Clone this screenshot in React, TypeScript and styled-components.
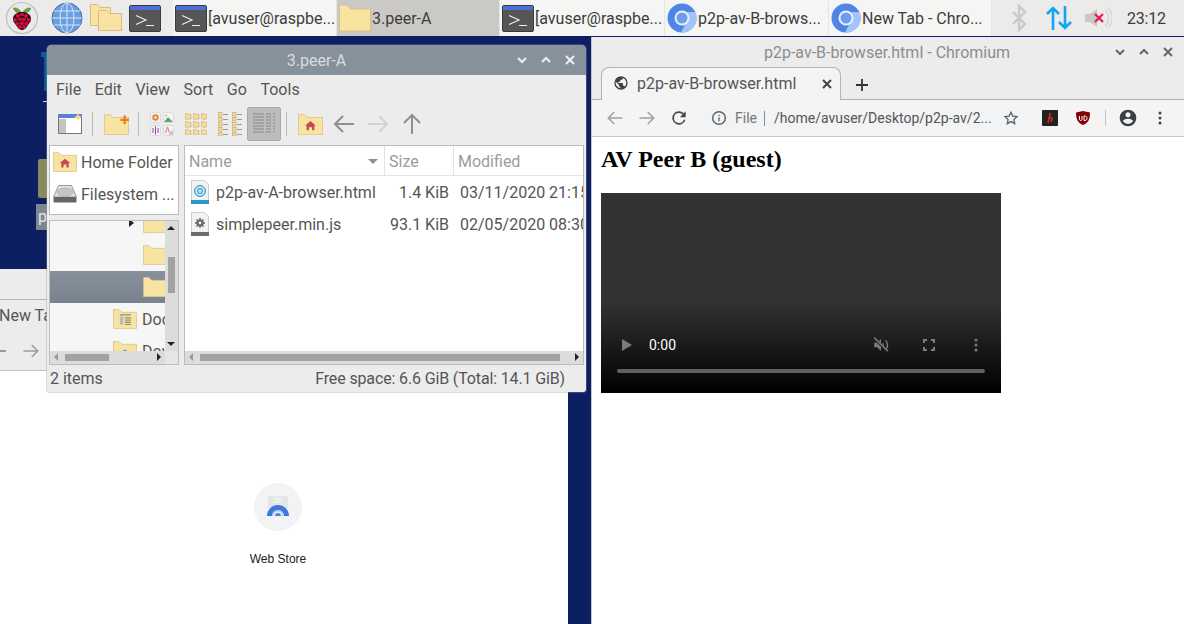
import React from "react";
import styled, { createGlobalStyle } from "styled-components";

const Global = createGlobalStyle`
  html, body { margin: 0; padding: 0; width: 1184px; height: 624px; overflow: hidden; }
  body { font-family: Roboto, "Liberation Sans", sans-serif; background: #0d1f63; }
  #root { width: 1184px; height: 624px; }
  svg { display: block; flex: none; }
`;

const Screen = styled.div`
  width: 1184px; height: 624px; display: flex; flex-direction: column; overflow: hidden;
`;
const Panel = styled.div`
  height: 36px; flex: none; background: #ecebea; display: flex; align-items: center;
`;
const Launchers = styled.div`
  width: 173px; flex: none; height: 36px; display: flex; align-items: center; padding-left: 5px; box-sizing: border-box;
`;
const Slot = styled.div<{ $ml: number }>`
  margin-left: ${p => p.$ml}px; flex: none;
`;
const Task = styled.div<{ $active?: boolean; $w: number }>`
  width: ${p => p.$w}px; height: 36px; flex: none; box-sizing: border-box; display: flex; align-items: center; gap: 1px; padding-left: 2px;
  background: ${p => (p.$active ? "#cbc9c5" : "#f5f5f4")};
  font-size: 16px; color: #3c3c3c; white-space: nowrap; overflow: hidden;
  border-right: 1px solid #e6e5e3;
`;
const Tray = styled.div`
  flex: 1; display: flex; align-items: center; height: 36px;
`;
const Clock = styled.span`
  font-size: 16px; color: #3c3c3c; margin-left: 15px; letter-spacing: -0.2px;
`;
const Desktop = styled.div`
  flex: 1; position: relative; background: #0d1f63;
`;
const TrashLid = styled.div`
  position: absolute; left: 41px; top: 16px; width: 8px; height: 5px; background: #0b5c9c;
`;
const Trash = styled.div`
  position: absolute; left: 44px; top: 21px; width: 5px; height: 34px; background: #0b5a96;
`;
const TrashMark = styled.div`
  position: absolute; left: 43px; top: 65px; width: 5px; height: 1px; background: #d5d9e6;
`;
const DeskFolder = styled.div`
  position: absolute; left: 38px; top: 123px; width: 12px; height: 39px; background: #8a8a62; border-radius: 2px 0 0 2px;
`;
const DeskLabel = styled.div`
  position: absolute; left: 36px; top: 168px; width: 14px; height: 26px; background: #7d8791; color: #e8e8e8; font-size: 16px; padding-left: 2px; box-sizing: border-box; line-height: 26px;
`;
const BackWindow = styled.div`
  position: absolute; left: 0; top: 233px; width: 568px; height: 355px; background: #fff; display: flex; flex-direction: column;
`;
const BackTabs = styled.div`
  height: 31px; background: #ececec; border-bottom: 1px solid #b5b5b5; box-sizing: border-box;
`;
const BackTabRow = styled.div`
  height: 32px; background: #ececec; font-size: 16px; color: #555; line-height: 32px; white-space: nowrap; overflow: hidden; margin-left: -1px; padding-left: 0;
`;
const BackNav = styled.div`
  height: 39px; background: #ececec; border-bottom: 1px solid #c4c4c4; box-sizing: border-box; display: flex; align-items: center; gap: 16px;
`;
const BackDash = styled.div`
  width: 6px; height: 2px; background: #9a9a9a;
`;
const StoreTile = styled.div`
  position: absolute; left: 218px; top: 214px; width: 120px; display: flex; flex-direction: column; align-items: center;
`;
const StoreCircle = styled.div`
  width: 48px; height: 48px; border-radius: 50%; background: #f1f3f4; display: flex; align-items: center; justify-content: center;
`;
const StoreLabel = styled.div`
  margin-top: 21px; font: 12px "Liberation Sans", Arial, sans-serif; color: #202124;
`;
const FileWindow = styled.div`
  position: absolute; left: 47px; top: 9px; width: 539px; height: 347px; background: #ececec; border-radius: 5px 5px 3px 3px; overflow: hidden; display: flex; flex-direction: column;
  box-shadow: 0 0 0 1px rgba(150,150,150,.35);
`;
const TitleBar = styled.div<{ $active?: boolean; $h: number }>`
  height: ${p => p.$h}px; flex: none; position: relative; display: flex; align-items: center; justify-content: center;
  background: ${p => (p.$active ? "#87919b" : "#ececec")}; color: ${p => (p.$active ? "#d9dcdf" : "#8d8d8d")}; font-size: 16px;
`;
const BrowserTitle = styled.span`
  margin: 2px 2px 0 0;
`;
const WinButtons = styled.div<{ $right: number; $gap: number }>`
  position: absolute; right: ${p => p.$right}px; top: 0; bottom: 0; display: flex; align-items: center; gap: ${p => p.$gap}px;
`;
const MenuBar = styled.div`
  height: 28px; flex: none; display: flex; align-items: center; padding-left: 9px; gap: 13.6px; font-size: 16px; color: #555;
`;
const ToolBar = styled.div`
  height: 42px; flex: none; display: flex; align-items: center; padding-left: 11px;
`;
const Sep = styled.div<{ $ml: number; $mr: number }>`
  width: 1px; height: 24px; background: #b9b9b9; margin: 0 ${p => p.$mr}px 0 ${p => p.$ml}px;
`;
const ToolBtn = styled.div<{ $on?: boolean; $ml?: number }>`
  width: 34px; height: 34px; display: flex; align-items: center; justify-content: center; box-sizing: border-box; border-radius: 2px; margin-left: ${p => p.$ml ?? 0}px;
  ${p => p.$on && "background:#bdbdbd;border:1px solid #a9a9a9;"}
`;
const Body = styled.div`
  height: 220px; flex: none; display: flex; padding: 0 2px; gap: 5px;
`;
const Side = styled.div`
  width: 130px; flex: none; display: flex; flex-direction: column; gap: 5px;
`;
const Places = styled.div`
  height: 70px; flex: none; background: #fff; border: 1px solid #bcbcbc; box-sizing: border-box; display: flex; flex-direction: column;
`;
const PlaceRow = styled.div`
  height: 32px; display: flex; align-items: center; gap: 4px; padding-left: 3px; font-size: 16px; color: #555; white-space: nowrap; overflow: hidden;
`;
const TreeBox = styled.div`
  flex: 1; border: 1px solid #bcbcbc; box-sizing: border-box; display: grid; grid-template-columns: 1fr 13px; grid-template-rows: 1fr 13px; background: #f6f6f6; overflow: hidden; min-height: 0;
`;
const TreeList = styled.div`
  overflow: hidden; min-width: 0; min-height: 0;
`;
const TreeInner = styled.div`
  margin-top: -14px; display: flex; flex-direction: column;
`;
const TreeRow = styled.div<{ $sel?: boolean; $pad: number }>`
  height: 32px; flex: none; display: flex; align-items: center; gap: 5px; padding-left: ${p => p.$pad}px; font-size: 16px; color: #555; white-space: nowrap;
  ${p => p.$sel && "background: linear-gradient(#87919b,#79838d);"}
`;
const Expander = styled.span`
  width: 0; height: 0; border-left: 5px solid #222; border-top: 4px solid transparent; border-bottom: 4px solid transparent; margin-right: 4px;
`;
const VScroll = styled.div`
  background: #dcdcdc; display: flex; flex-direction: column; align-items: center; justify-content: flex-start; position: relative;
`;
const Corner = styled.div` background: #e6e6e6; `;
const HScroll = styled.div<{ $fixed?: boolean }>`
  background: #dcdcdc; display: flex; align-items: center; position: relative;
  ${p => p.$fixed && "height:13px;flex:none;"}
`;
const Thumb = styled.div<{ $l: number; $w: number }>`
  margin-left: ${p => p.$l}px; width: ${p => p.$w}px; height: 7px; background: #a2a2a2;
`;
const VThumb = styled.div`
  position: absolute; top: 36px; left: 3px; width: 7px; height: 36px; background: #a2a2a2;
`;
const Arrow = styled.span<{ $dir: "u" | "d" | "l" | "r"; $c: string }>`
  position: absolute; width: 0; height: 0;
  ${p => {
    if (p.$dir === "u") return `top:5px;left:2px;border-left:4px solid transparent;border-right:4px solid transparent;border-bottom:4px solid ${p.$c};`;
    if (p.$dir === "d") return `bottom:5px;left:2px;border-left:4px solid transparent;border-right:4px solid transparent;border-top:4px solid ${p.$c};`;
    if (p.$dir === "l") return `left:4px;top:2px;border-top:4px solid transparent;border-bottom:4px solid transparent;border-right:4px solid ${p.$c};`;
    return `right:4px;top:2px;border-top:4px solid transparent;border-bottom:4px solid transparent;border-left:4px solid ${p.$c};`;
  }}
`;
const Files = styled.div`
  flex: 1; min-width: 0; background: #fff; border: 1px solid #bcbcbc; box-sizing: border-box; display: flex; flex-direction: column; overflow: hidden;
`;
const HeadRow = styled.div`
  height: 30px; flex: none; display: grid; grid-template-columns: 200px 69px 140px; border-bottom: 1px solid #e3e3e3; box-sizing: border-box; font-size: 16px; color: #9b9b9b;
`;
const HeadCell = styled.div`
  display: flex; align-items: center; padding: 1px 0 0 4px; border-right: 1px solid #e3e3e3; position: relative;
`;
const SortMark = styled.span`
  position: absolute; right: 6px; top: 13px; border-left: 5px solid transparent; border-right: 5px solid transparent; border-top: 5px solid #8f8f8f;
`;
const FileList = styled.div`
  flex: 1;
`;
const FileRow = styled.div`
  height: 32px; display: grid; grid-template-columns: 200px 69px 140px; font-size: 16px; color: #555; white-space: nowrap;
`;
const NameCell = styled.div`
  display: flex; align-items: center; gap: 7px; padding-left: 6px;
`;
const SizeCell = styled.div`
  display: flex; align-items: center; justify-content: flex-end; padding-right: 5px;
`;
const DateCell = styled.div`
  display: flex; align-items: center; padding-left: 6px;
`;
const Status = styled.div`
  flex: 1; display: flex; justify-content: space-between; align-items: center; padding: 0 21px 0 3px; font-size: 16px; color: #555;
`;
const FreeSpace = styled.span`
  letter-spacing: -0.14px;
`;
const BrowserWindow = styled.div`
  position: absolute; left: 591px; top: 1px; right: 0; bottom: 0; background: #fff; border-left: 1px solid #c4c4c4; display: flex; flex-direction: column;
`;
const TabStrip = styled.div`
  height: 34px; flex: none; background: #ececec; border-bottom: 1px solid #aeaeae; box-sizing: border-box; display: flex; align-items: flex-end; padding-left: 9px;
`;
const Tab = styled.div`
  width: 240px; height: 33px; margin-bottom: -1px; box-sizing: border-box; background: #f4f4f4; border: 1px solid #b4b4b4; border-bottom: none; border-radius: 8px 8px 0 0; display: flex; align-items: center; padding: 0 0 2px 11px; gap: 8px; font-size: 16px; color: #555; position: relative;
`;
const NewTab = styled.div`
  margin: 0 0 7px 14px;
`;
const NavBar = styled.div`
  height: 37px; flex: none; background: #f4f4f4; border-bottom: 1px solid #c9c9c9; box-sizing: border-box; display: flex; align-items: center; padding-left: 14px;
`;
const NavSpace = styled.span<{ $w: number }>`
  width: ${p => p.$w}px; flex: none;
`;
const Omni = styled.div`
  width: 326px; height: 28px; margin-left: 13px; background: #f1f3f4; border-radius: 14px; box-sizing: border-box; display: flex; align-items: center; padding-left: 9px; font-size: 14px; color: #555; position: relative; white-space: nowrap;
`;
const OmniFile = styled.span`
  color: #777; margin-left: 8px; padding-right: 7px; border-right: 1px solid #8a8a8a; line-height: 15px;
`;
const OmniPath = styled.span`
  margin-left: 9px; font-size: 14px;
`;
const OmniStar = styled.span`
  position: absolute; right: 9px; top: 6px;
`;
const NavIcons = styled.div`
  display: flex; align-items: center; margin-left: 14px;
`;
const NavDivider = styled.div`
  width: 1px; height: 16px; background: #c4c4c4; margin: 0 12px 0 14px;
`;
const Page = styled.div`
  flex: 1; background: #fff; padding: 0 9px;
`;
const Heading = styled.h2`
  font: bold 24px/27px "Liberation Serif", "Times New Roman", serif; color: #000; margin: 9px 0 20px;
`;
const Video = styled.div`
  width: 400px; height: 200px; position: relative; background: linear-gradient(#333 0, #333 54%, #000 100%); display: flex; flex-direction: column; justify-content: flex-end;
`;
const Controls = styled.div`
  display: flex; align-items: center; height: 20px; margin-bottom: 38px; padding-left: 20px; color: #fff; font-size: 14px;
`;
const Time = styled.span`
  margin-left: 16px; width: 223px;
`;
const CtlGroup = styled.div`
  display: flex; align-items: center; gap: 31px;
`;
const Progress = styled.div`
  position: absolute; left: 16px; right: 16px; bottom: 20px; height: 4px; border-radius: 2px; background: #606060;
`;

const Pi = () => (
  <svg width="34" height="34" viewBox="0 0 34 34">
    <circle cx="17" cy="17" r="15.5" fill="#e9e9e9" stroke="#bfbfbf" strokeWidth="1.2" />
    <path d="M16.500 12C15 8 11 6.500 8.500 7c.3 3 3.500 5.500 8 5zM17.500 12C19 8 23 6.500 25.500 7c-.3 3-3.500 5.500-8 5z" fill="#6aa53a" stroke="#3f7a25" strokeWidth=".5" />
    <path d="M17 11c4 0 9 2 9 7 0 3-2 4-3 6-1.500 3-4 5-6 5s-4.500-2-6-5c-1-2-3-3-3-6 0-5 5-7 9-7z" fill="#1d0a0e" />
    {[[17,13.500],[12.800,14.800],[21.200,14.800],[10.200,18.800],[15,18.300],[19,18.300],[23.800,18.800],[12.500,22.500],[17,22.300],[21.500,22.500],[14.800,26],[19.200,26]].map(([x,y],i)=>(
      <circle key={i} cx={x} cy={y} r="2.100" fill="#c8103e" />
    ))}
  </svg>
);
const Globe = () => (
  <svg width="32" height="32" viewBox="0 0 32 32">
    <circle cx="16" cy="16" r="15" fill="#6b9fe0" stroke="#3f6aa8" />
    <g stroke="#d6e6fb" strokeWidth="1" fill="none">
      <ellipse cx="16" cy="16" rx="7" ry="15" /><path d="M16 1v30M1 16h30M3 9h26M3 23h26" />
    </g>
  </svg>
);
const FolderPair = () => (
  <svg width="33" height="28" viewBox="0 0 33 28">
    <path d="M.5.5h7l3 3h10v18H.5z" fill="#f8e3a0" stroke="#d6bd88" />
    <path d="M8.500 6.500h8l3 3h12v17h-23z" fill="#f8e3a0" stroke="#d6bd88" />
  </svg>
);
const Term = () => (
  <svg width="32" height="27" viewBox="0 0 32 27">
    <rect x=".5" y=".5" width="31" height="26" rx="1.500" fill="#565656" stroke="#3a3a3a" />
    <rect x="1" y="1" width="30" height="4" fill="#4d6fd6" />
    <path d="M7 10.500l10 4.500-10 4.500M17 20.500h8" fill="none" stroke="#eee" strokeWidth="1.200" />
  </svg>
);
const Folder = ({ w = 32, h = 27, kind }: { w?: number; h?: number; kind?: "home" | "doc" | "dl" | "new" }) => (
  <svg width={w} height={h} viewBox="0 0 32 27">
    <path d="M.5.5h7l4 4h20v22H.5z" fill="#f9e3a0" stroke="#d8bf88" />
    {kind === "home" && <path d="M16 9l7 6h-2v6h-3v-4h-4v4h-3v-6H9z" fill="#c9474f" />}
    {kind === "doc" && <g><rect x="9" y="10" width="5" height="11" fill="#b9bcc0" /><path d="M9 8h15M16 12h8M16 15h8M16 18h8M16 21h8" stroke="#8d8d80" strokeWidth="1.500" /></g>}
    {kind === "dl" && <rect x="14" y="12" width="4" height="10" fill="#3d9ad6" />}
    {kind === "new" && <path d="M25 2h3v4h4v3h-4v4h-3V9h-4V6h4z" fill="#ef7d14" />}
  </svg>
);
const Chromium = () => (
  <svg width="30" height="30" viewBox="0 0 30 30">
    <circle cx="15" cy="15" r="14.500" fill="#4f86e6" />
    <path d="M15 9h13.500A14.500 14.500 0 0 1 14 29.500L20 18z" fill="#a3c4f7" />
    <circle cx="15" cy="15" r="7.500" fill="#e8f0fd" />
    <circle cx="15" cy="15" r="5.500" fill="#6d9eee" />
  </svg>
);
const Bluetooth = () => (
  <svg width="16" height="28" viewBox="0 0 16 28"><path d="M2 8l12 12-6 6V2l6 6L2 20" fill="none" stroke="#c9c9c9" strokeWidth="2.400" /></svg>
);
const NetArrows = () => (
  <svg width="26" height="26" viewBox="0 0 26 26"><path d="M7 25V3M1 9l6-6 6 6M19 1v22M13 17l6 6 6-6" fill="none" stroke="#12a5f4" strokeWidth="2.600" /></svg>
);
const Volume = () => (
  <svg width="28" height="24" viewBox="0 0 28 24">
    <path d="M1 8h5l7-5v18l-7-5H1z" fill="#c8c8c8" /><path d="M21 4a11 11 0 0 1 0 16M24 2a14 14 0 0 1 0 20" fill="none" stroke="#d5d5d5" strokeWidth="1.500" />
    <path d="M11 8l8 8M19 8l-8 8" stroke="#e8174f" strokeWidth="2.200" />
  </svg>
);
const Caret = ({ d, c }: { d: "v" | "^" | "x"; c: string }) => (
  <svg width="10" height="10" viewBox="0 0 10 10">
    <path d={d === "v" ? "M1 3l4 4 4-4" : d === "^" ? "M1 7l4-4 4 4" : "M1 1l8 8M9 1l-8 8"} fill="none" stroke={c} strokeWidth="2" />
  </svg>
);
const ArrowIcon = ({ d, c, s = 24, sw = 2 }: { d: "l" | "r" | "u"; c: string; s?: number; sw?: number }) => (
  <svg width={s} height={s} viewBox="0 0 24 24">
    <path d={d === "l" ? "M22 12H3M11 4l-8 8 8 8" : d === "r" ? "M2 12h19M13 4l8 8-8 8" : "M12 22V3M4 11l8-8 8 8"} fill="none" stroke={c} strokeWidth={sw} />
  </svg>
);
const PaneIcon = () => (
  <svg width="25" height="22" viewBox="0 0 25 22">
    <rect x=".5" y="1.500" width="23" height="19" fill="#fff" stroke="#777" />
    <rect x="1" y="6" width="7" height="14" fill="#c2c2c2" />
    <rect x="0" y="1" width="24" height="4" fill="#5b7fd8" />
    <path d="M20 0l1.200 2.800L24 4l-2.800 1.200L20 8l-1.200-2.800L16 4l2.800-1.200z" fill="#f6d77a" />
  </svg>
);
const MimeIcon = () => (
  <svg width="24" height="24" viewBox="0 0 24 24">
    <rect x=".5" y=".5" width="10" height="10" rx="1" fill="#f6f2ea" stroke="#dcdcdc" /><circle cx="5.500" cy="5.500" r="3.200" fill="#e0893a" /><circle cx="5.500" cy="5.500" r="1.200" fill="#f6f2ea" />
    <rect x="13.500" y=".5" width="10" height="10" rx="1" fill="#f3f5f0" stroke="#dcdcdc" /><path d="M14 10l4-5 5 5z" fill="#5ea27c" /><circle cx="16" cy="3.500" r="1" fill="#e7a657" />
    <rect x=".5" y="13.500" width="10" height="10" rx="1" fill="#f5f0f6" stroke="#dcdcdc" /><path d="M3 16v5M5.500 14.500v8M8 16v5" stroke="#8b4fa5" />
    <rect x="13.500" y="13.500" width="10" height="10" rx="1" fill="#f8f0f0" stroke="#dcdcdc" /><path d="M15.500 21l2-6 2 6" fill="none" stroke="#c98484" /><rect x="19" y="19" width="4" height="4" fill="#ebbcbc" />
  </svg>
);
const GridIcon = () => (
  <svg width="22" height="22" viewBox="0 0 22 22">
    {[0, 8, 16].flatMap(y => [0, 8, 16].map(x => (
      <path key={`${x}-${y}`} d={`M${x + .5} ${y + .5}h2.500l1 1h2v4.500h-5.500z`} fill="#f3dc9a" stroke="#d2b679" strokeWidth=".8" />
    )))}
  </svg>
);
const ListIcon = () => (
  <svg width="24" height="24" viewBox="0 0 24 24">
    {[0, 5, 10, 15, 20].flatMap(y => [0, 14].map(x => (
      <g key={`${x}-${y}`}><rect x={x + .5} y={y + .5} width="3.500" height="3.500" fill="#f3dc9a" stroke="#cdb176" strokeWidth=".8" /><path d={`M${x + 5} ${y + 2.500}h5`} stroke="#999" /></g>
    )))}
  </svg>
);
const DetailIcon = () => (
  <svg width="24" height="24" viewBox="0 0 24 24">
    {[2, 5, 8, 11, 14, 17, 20].map(y => (
      <path key={y} d={`M1 ${y}h11M14 ${y}h5M21 ${y}h2`} stroke="#8a8a8a" strokeWidth="1.200" />
    ))}
  </svg>
);
const Disk = () => (
  <svg width="24" height="20" viewBox="0 0 24 20">
    <path d="M5.500 1.500h13l5 11.500H.5z" fill="#e2e2e2" stroke="#9a9a9a" />
    <ellipse cx="12" cy="8" rx="8" ry="4" fill="#c6c6c6" stroke="#a5a5a5" strokeWidth=".6" />
    <rect x=".5" y="13" width="23" height="5.500" rx="1" fill="#666" />
  </svg>
);
const HtmlFile = () => (
  <svg width="18" height="24" viewBox="0 0 18 24">
    <path d="M.5.500h13l4 4v23H.5z" fill="#f2f2f2" stroke="#ccc" />
    <rect x="0" y="20" width="18" height="4" fill="#2b97cc" />
    <circle cx="9" cy="11" r="5.500" fill="#bfe2f3" stroke="#2f9acb" /><circle cx="9" cy="11" r="2.500" fill="none" stroke="#2f9acb" />
  </svg>
);
const JsFile = () => (
  <svg width="18" height="24" viewBox="0 0 18 24">
    <path d="M.5.500h13l4 4v23H.5z" fill="#f2f2f2" stroke="#ccc" />
    <rect x="0" y="20" width="18" height="4" fill="#6b6b6b" />
    <circle cx="9" cy="11" r="2.500" fill="none" stroke="#666" strokeWidth="2.200" />
    <path d="M9 6v2M9 14v2M4 11h2M12 11h2M5.500 7.500l1.400 1.400M11.100 13.100l1.400 1.400M12.500 7.500l-1.400 1.400M6.900 13.100l-1.400 1.400" stroke="#666" strokeWidth="1.500" />
  </svg>
);
const Store = () => (
  <svg width="24" height="24" viewBox="0 0 24 24">
    <rect x="2" y="1" width="20" height="12" fill="#e3e5e7" /><rect x="8" y="3" width="8" height="1.500" fill="#f4f4f5" /><rect x="8" y="6" width="8" height="1.500" fill="#f4f4f5" />
    <path d="M1 21a11 11 0 0 1 22 0h-5a6 6 0 0 0-12 0z" fill="#3f78de" />
    <path d="M6 21a6 6 0 0 1 12 0h-1.500a4.500 4.500 0 0 0-9 0z" fill="#a9c6f2" />
    <path d="M9 21a3 3 0 0 1 6 0z" fill="#4c83e2" />
  </svg>
);
const GlobeFav = () => (
  <svg width="16" height="16" viewBox="0 0 24 24"><path fill="#3c4043" d="M12 2a10 10 0 1 0 0 20 10 10 0 0 0 0-20zM11 19.900A8 8 0 0 1 4.200 10.200L9 15v1a2 2 0 0 0 2 2zm6.900-2.500A2 2 0 0 0 16 16h-1v-3a1 1 0 0 0-1-1H8v-2h2a1 1 0 0 0 1-1V7h2a2 2 0 0 0 2-2v-.4a8 8 0 0 1 2.900 12.800z" /></svg>
);
const Reload = () => (
  <svg width="20" height="20" viewBox="0 0 24 24"><path fill="#444" d="M17.650 6.350A8 8 0 1 0 19.730 14h-2.080A6 6 0 1 1 12 6c1.660 0 3.140.69 4.220 1.780L13 11h7V4z" /></svg>
);
const Info = () => (
  <svg width="16" height="16" viewBox="0 0 24 24"><circle cx="12" cy="12" r="9.500" fill="none" stroke="#5f6368" strokeWidth="2.200" /><path d="M11 11h2v6h-2zM11 7h2v2h-2z" fill="#5f6368" /></svg>
);
const Star = () => (
  <svg width="16" height="16" viewBox="0 0 24 24"><path d="M12 3.500l2.700 5.700 6.300.8-4.600 4.300 1.200 6.200L12 17.400l-5.600 3.100 1.200-6.200L3 10l6.300-.8z" fill="none" stroke="#5f6368" strokeWidth="2" /></svg>
);
const HExt = () => (
  <svg width="16" height="16" viewBox="0 0 16 16"><rect width="16" height="16" rx="1" fill="#222" /><path d="M6 13l2.200-10M7 9c2-2.500 3.500-1.500 2.800.5L9.200 12" fill="none" stroke="#d42a20" strokeWidth="1.500" /></svg>
);
const UBlock = () => (
  <svg width="16" height="16" viewBox="0 0 16 16"><path d="M8 1l7 1.500c0 7-2 10.500-7 12.500C3 13 1 9.500 1 2.500z" fill="#800000" /><path d="M4.500 6v3c0 1 .5 1.500 1.300 1.500S7 10 7 9V6M9 6h1c1.300 0 2 1 2 2.200s-.7 2.300-2 2.300H9z" fill="none" stroke="#fff" strokeWidth="1" /></svg>
);
const Account = () => (
  <svg width="20" height="20" viewBox="0 0 24 24"><path fill="#3c4043" d="M12 2a10 10 0 1 0 0 20 10 10 0 0 0 0-20zm0 3a3 3 0 1 1 0 6 3 3 0 0 1 0-6zm0 14.200a7.200 7.200 0 0 1-6-3.220c.03-2 4-3.080 6-3.080s5.970 1.090 6 3.080a7.200 7.200 0 0 1-6 3.220z" /></svg>
);
const Kebab = ({ c }: { c: string }) => (
  <svg width="16" height="16" viewBox="0 0 16 16" fill={c}><circle cx="8" cy="3" r="1.500" /><circle cx="8" cy="8" r="1.500" /><circle cx="8" cy="13" r="1.500" /></svg>
);
const Plus = () => (
  <svg width="14" height="14" viewBox="0 0 14 14"><path d="M7 1v12M1 7h12" stroke="#333" strokeWidth="1.800" /></svg>
);
const PlayIcon = () => (
  <svg width="12" height="14" viewBox="0 0 12 14"><path d="M1 1l10 6-10 6z" fill="#7b7b7b" /></svg>
);
const Muted = () => (
  <svg width="18" height="18" viewBox="0 0 24 24" fill="#7b7b7b"><path d="M3 9v6h4l5 5V4L7 9zM16 12a4.500 4.500 0 0 0-2-3.700v7.400a4.500 4.500 0 0 0 2-3.700z" /><path d="M18 6a8 8 0 0 1 0 12" fill="none" stroke="#7b7b7b" strokeWidth="2" /><path d="M3 3l18 18" stroke="#2a2a2a" strokeWidth="3.500" /><path d="M3 2l18 18" stroke="#7b7b7b" strokeWidth="2" /></svg>
);
const Fullscreen = () => (
  <svg width="16" height="16" viewBox="0 0 16 16"><path d="M3 6V3h3M10 3h3v3M13 10v3h-3M6 13H3v-3" fill="none" stroke="#7b7b7b" strokeWidth="2" /></svg>
);

export default function App() {
  return (
    <Screen>
      <Global />
      <Panel>
        <Launchers>
          <Slot $ml={0}><Pi /></Slot>
          <Slot $ml={12}><Globe /></Slot>
          <Slot $ml={7}><FolderPair /></Slot>
          <Slot $ml={6}><Term /></Slot>
        </Launchers>
        <Task $w={164}><Term />[avuser@raspbe...</Task>
        <Task $w={163} $active><Folder w={32} h={32} />3.peer-A</Task>
        <Task $w={165}><Term />[avuser@raspbe...</Task>
        <Task $w={164}><Chromium />p2p-av-B-brows...</Task>
        <Task $w={163}><Chromium />New Tab - Chro...</Task>
        <Tray>
          <Slot $ml={19}><Bluetooth /></Slot>
          <Slot $ml={19}><NetArrows /></Slot>
          <Slot $ml={12}><Volume /></Slot>
          <Clock>23:12</Clock>
        </Tray>
      </Panel>
      <Desktop>
        <TrashLid />
        <Trash />
        <TrashMark />
        <DeskFolder />
        <DeskLabel>p</DeskLabel>
        <BackWindow>
          <BackTabs />
          <BackTabRow>New Tab</BackTabRow>
          <BackNav>
            <BackDash />
            <ArrowIcon d="r" c="#9a9a9a" s={18} />
          </BackNav>
          <StoreTile>
            <StoreCircle><Store /></StoreCircle>
            <StoreLabel>Web Store</StoreLabel>
          </StoreTile>
        </BackWindow>
        <FileWindow>
          <TitleBar $active $h={30}>
            3.peer-A
            <WinButtons $right={11} $gap={14}>
              <Caret d="v" c="#eef0f2" /><Caret d="^" c="#eef0f2" /><Caret d="x" c="#eef0f2" />
            </WinButtons>
          </TitleBar>
          <MenuBar>
            <span>File</span><span>Edit</span><span>View</span><span>Sort</span><span>Go</span><span>Tools</span>
          </MenuBar>
          <ToolBar>
            <PaneIcon />
            <Sep $ml={9} $mr={11} />
            <Folder w={25} h={21} kind="new" />
            <Sep $ml={9} $mr={11} />
            <MimeIcon />
            <ToolBtn $ml={5}><GridIcon /></ToolBtn>
            <ToolBtn><ListIcon /></ToolBtn>
            <ToolBtn $on><DetailIcon /></ToolBtn>
            <Sep $ml={5} $mr={11} />
            <Folder w={25} h={21} kind="home" />
            <ToolBtn $ml={4}><ArrowIcon d="l" c="#8f8f8f" /></ToolBtn>
            <ToolBtn><ArrowIcon d="r" c="#d2d2d2" /></ToolBtn>
            <ToolBtn><ArrowIcon d="u" c="#8f8f8f" /></ToolBtn>
          </ToolBar>
          <Body>
            <Side>
              <Places>
                <PlaceRow><Folder w={24} h={20} kind="home" />Home Folder</PlaceRow>
                <PlaceRow><Disk />Filesystem ...</PlaceRow>
              </Places>
              <TreeBox>
                <TreeList>
                  <TreeInner>
                    <TreeRow $pad={79}><Expander /><Folder w={24} h={20} /></TreeRow>
                    <TreeRow $pad={93}><Folder w={24} h={20} /></TreeRow>
                    <TreeRow $pad={93} $sel><Folder w={24} h={20} /></TreeRow>
                    <TreeRow $pad={63}><Folder w={24} h={20} kind="doc" />Documents</TreeRow>
                    <TreeRow $pad={63}><Folder w={24} h={20} kind="dl" />Downloads</TreeRow>
                  </TreeInner>
                </TreeList>
                <VScroll>
                  <Arrow $dir="u" $c="#222" />
                  <VThumb />
                  <Arrow $dir="d" $c="#222" />
                </VScroll>
                <HScroll>
                  <Arrow $dir="l" $c="#999" />
                  <Thumb $l={15} $w={44} />
                  <Arrow $dir="r" $c="#222" />
                </HScroll>
                <Corner />
              </TreeBox>
            </Side>
            <Files>
              <HeadRow>
                <HeadCell>Name<SortMark /></HeadCell>
                <HeadCell>Size</HeadCell>
                <HeadCell>Modified</HeadCell>
              </HeadRow>
              <FileList>
                <FileRow>
                  <NameCell><HtmlFile />p2p-av-A-browser.html</NameCell>
                  <SizeCell>1.4 KiB</SizeCell>
                  <DateCell>03/11/2020 21:15</DateCell>
                </FileRow>
                <FileRow>
                  <NameCell><JsFile />simplepeer.min.js</NameCell>
                  <SizeCell>93.1 KiB</SizeCell>
                  <DateCell>02/05/2020 08:30</DateCell>
                </FileRow>
              </FileList>
              <HScroll $fixed>
                <Arrow $dir="l" $c="#999" />
                <Thumb $l={15} $w={360} />
                <Arrow $dir="r" $c="#222" />
              </HScroll>
            </Files>
          </Body>
          <Status>
            <span>2 items</span>
            <FreeSpace>Free space: 6.6 GiB (Total: 14.1 GiB)</FreeSpace>
          </Status>
        </FileWindow>
        <BrowserWindow>
          <TitleBar $h={29}>
            <BrowserTitle>p2p-av-B-browser.html - Chromium</BrowserTitle>
            <WinButtons $right={11} $gap={14}>
              <Caret d="v" c="#666" /><Caret d="^" c="#666" /><Caret d="x" c="#666" />
            </WinButtons>
          </TitleBar>
          <TabStrip>
            <Tab>
              <GlobeFav />p2p-av-B-browser.html
              <WinButtons $right={8} $gap={0}><Caret d="x" c="#444" /></WinButtons>
            </Tab>
            <NewTab><Plus /></NewTab>
          </TabStrip>
          <NavBar>
            <ArrowIcon d="l" c="#a0a0a0" s={18} />
            <NavSpace $w={14} />
            <ArrowIcon d="r" c="#a0a0a0" s={18} />
            <NavSpace $w={13} />
            <Reload />
            <Omni>
              <Info /><OmniFile>File</OmniFile>
              <OmniPath>/home/avuser/Desktop/p2p-av/2...</OmniPath>
              <OmniStar><Star /></OmniStar>
            </Omni>
            <NavIcons>
              <HExt /><NavSpace $w={17} /><UBlock />
              <NavDivider />
              <Account /><NavSpace $w={14} /><Kebab c="#444" />
            </NavIcons>
          </NavBar>
          <Page>
            <Heading>AV Peer B (guest)</Heading>
            <Video>
              <Controls>
                <PlayIcon />
                <Time>0:00</Time>
                <CtlGroup><Muted /><Fullscreen /><Kebab c="#7b7b7b" /></CtlGroup>
              </Controls>
              <Progress />
            </Video>
          </Page>
        </BrowserWindow>
      </Desktop>
    </Screen>
  );
}
